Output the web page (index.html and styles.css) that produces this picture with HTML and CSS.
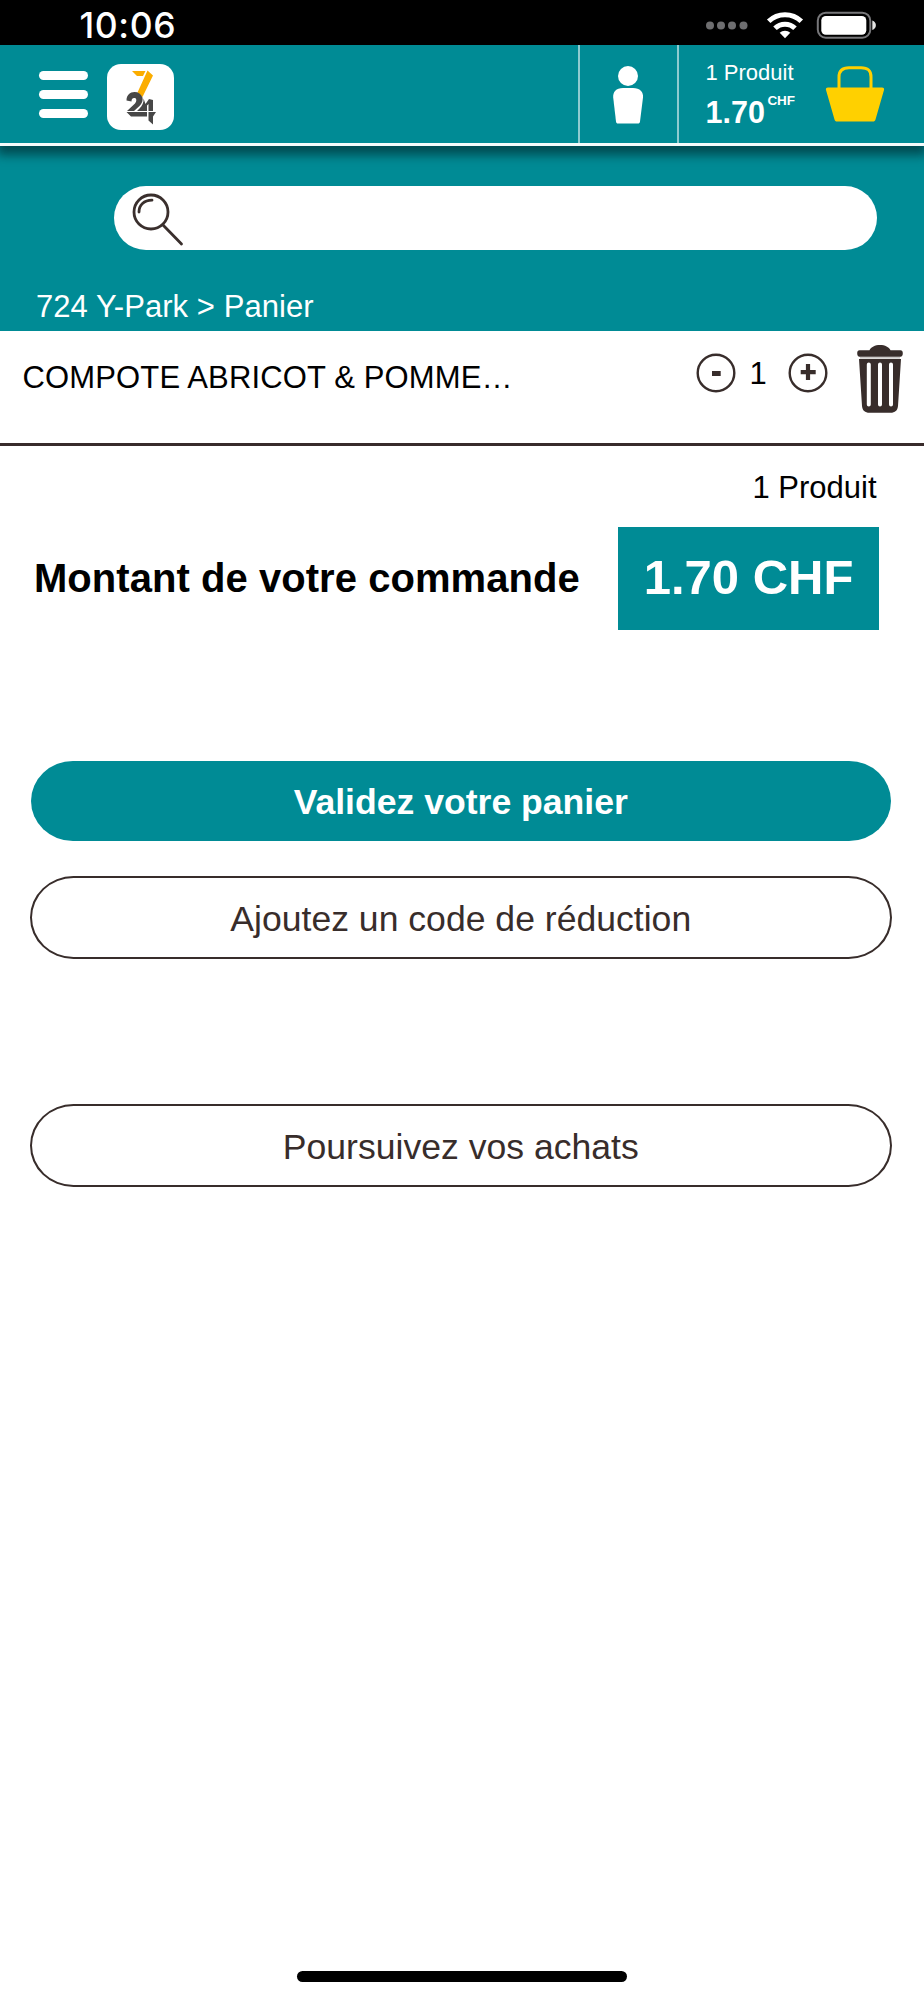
FILE: index.html
```html
<!DOCTYPE html>
<html lang="fr">
<head>
<meta charset="utf-8">
<title>724 Y-Park - Panier</title>
<link rel="stylesheet" href="styles.css">
</head>
<body>
<div class="screen">
  <div class="status">
    <span class="time">10:06</span>
    <svg class="status-icons" width="172" height="30" viewBox="0 0 172 30">
      <g fill="#6e6e70"><circle cx="4" cy="15.500" r="4"/><circle cx="15" cy="15.500" r="4"/><circle cx="26" cy="15.500" r="4"/><circle cx="37.500" cy="15.500" r="4"/></g>
      <g fill="none" stroke="#fff" stroke-width="5">
        <path d="M62.700 11.200a23.500 23.500 0 0 1 32.600 0"/>
        <path d="M69 18.300a14.200 14.200 0 0 1 20 0"/>
      </g>
      <path fill="#fff" d="M79 28.200l-5.300-5.400a7.800 7.800 0 0 1 10.600 0z"/>
      <rect x="111.800" y="2.700" width="52.500" height="25" rx="8" fill="none" stroke="#77777a" stroke-width="2"/>
      <rect x="115.300" y="6" width="45" height="18.700" rx="4.500" fill="#fff"/>
      <path fill="#e4e4e4" d="M166.300 10.500c4.800 1.500 4.800 8 0 9.500z"/>
    </svg>
  </div>

  <header class="header">
    <button class="menu" aria-label="Menu"><i></i><i></i><i></i></button>
    <div class="logo">
      <svg width="67" height="66" viewBox="0 0 67 66">
        <path fill="#fbad00" d="M25 7h13.500l-2.500 5h-6zM40.500 6.500l5.500 5-10.500 21.500-5-4.500z"/>
        <g fill="#474747">
          <path d="M19.500 36.500C19.500 31 23 28 27.500 28c4 0 6.500 2 8 5.500.6 3-.5 6-3 8.500l-5.500 5h-7l8-7.500c2-2.500 1.500-5 0-5.500-2.500-.5-3.500 1-3.500 3.500z"/>
          <path d="M36.500 34.500c.5 4-1.500 7.500-4 10L30 47h10v-5.500l1.500-1.500v7H46V36l-4-1-3.500 5z"/>
          <path d="M19.500 48h20.500v4.500H24zM41.500 48h7.500l-3 4.500v8l-4.500-4z"/>
        </g>
      </svg>
    </div>
    <div class="account">
      <svg width="32" height="60" viewBox="0 0 32 60">
        <circle cx="16" cy="11" r="10" fill="#fff"/>
        <path fill="#fff" d="M11 23h10c7 0 10.500 4 10 9.500L28 56.500c-.2 1.500-1 2-2 2H6c-1.200 0-1.800-.5-2-2L1.200 32.500C.8 27 4 23 11 23z"/>
      </svg>
    </div>
    <div class="cart">
      <div class="cart-text">
        <span class="cart-count">1 Produit</span>
        <span class="cart-total">1.70<sup>CHF</sup></span>
      </div>
      <svg width="60" height="58" viewBox="0 0 60 58">
        <path fill="none" stroke="#ffd000" stroke-width="3" d="M14 24V12C14 5 18 2.700 24 2.700h12c6.500 0 10 2.300 10 9.300v12"/>
        <path fill="#ffd000" d="M3 22.500h54c1.700 0 2.500 1 2 2.500l-8.500 29.500c-.5 1.500-1.200 2-2.500 2H12c-1.300 0-2-.5-2.500-2L1 25c-.5-1.500.3-2.500 2-2.500z"/>
      </svg>
    </div>
  </header>

  <section class="banner">
    <div class="search">
      <svg width="52" height="54" viewBox="0 0 52 54" fill="none" stroke="#3a2f2d" stroke-linecap="round">
        <circle cx="19" cy="20" r="17" stroke-width="2.800"/>
        <path stroke-width="2.800" d="M7 20C7 13 12 8.200 20 8.200M31 33l18.500 19"/>
      </svg>
    </div>
    <nav class="crumbs">724 Y-Park &gt; Panier</nav>
  </section>

  <div class="item">
    <span class="item-name">COMPOTE ABRICOT &amp; POMME…</span>
    <svg class="minus" width="40" height="40" viewBox="0 0 40 40">
      <circle cx="20" cy="20" r="18.300" fill="none" stroke="#382d2b" stroke-width="2.400"/>
      <path fill="#382d2b" d="M16 18h8.700v5H16z"/>
    </svg>
    <span class="qty">1</span>
    <svg class="plus" width="40" height="40" viewBox="0 0 40 40">
      <circle cx="20" cy="20" r="18.300" fill="none" stroke="#382d2b" stroke-width="2.400"/>
      <path fill="none" stroke="#382d2b" stroke-width="4.200" d="M12.700 19.200h15M20 11v16"/>
    </svg>
    <svg class="trash" width="46" height="70" viewBox="0 0 46 70">
      <path fill="#382d2b" d="M2.500 6.200h10C14 3 18 1 23 1s9 2 10.500 5.200h10c1.500 0 2.300 1 2.300 3s-.8 3.500-2.300 3.500h-41C1 12.700.2 11.200.2 9.200s.8-3 2.300-3z"/>
      <path fill="#b9b4b3" d="M3 13.300h40v1.200H3z"/>
      <path fill="#382d2b" fill-rule="evenodd" d="M2 15h42l-3 47c-.4 4.500-3 6.800-7.500 6.800h-21C8 68.800 5.400 66.500 5 62zM9.800 20.500v40a2 2 0 0 0 4 0v-40a2 2 0 0 0-4 0zM21 20.500v40a2 2 0 0 0 4 0v-40a2 2 0 0 0-4 0zM32 20.500v40a2 2 0 0 0 4 0v-40a2 2 0 0 0-4 0z"/>
    </svg>
  </div>

  <main class="summary">
    <p class="count">1 Produit</p>
    <div class="amount">
      <span class="amount-label">Montant de votre commande</span>
      <span class="amount-value">1.70 CHF</span>
    </div>
    <div class="actions">
      <button class="btn primary">Validez votre panier</button>
      <button class="btn">Ajoutez un code de réduction</button>
      <button class="btn next">Poursuivez vos achats</button>
    </div>
  </main>
  <div class="home-bar"></div>
</div>
</body>
</html>
```
FILE: styles.css
```css
* { box-sizing: border-box; }
body { margin: 0; background: #fff; font-family: "Liberation Sans", Arial, sans-serif; color: #000; }
button { margin: 0; padding: 0; border: 0; background: none; font: inherit; color: inherit; }
svg { display: block; flex: none; }

.screen { width: 924px; height: 2000px; display: flex; flex-direction: column; }

.status { height: 45px; flex: none; background: #000; color: #fff; display: flex; justify-content: space-between; padding: 0 46px 0 79.5px; }
.time { font: 500 35.5px/51px Inter, sans-serif; letter-spacing: 0.6px; }
.status-icons { margin-top: 10px; }

.header { height: 100.5px; flex: none; display: flex; background: #008b95; border-bottom: 3px solid #f4fbfb; position: relative; z-index: 1; box-shadow: 0 6px 10px 3px rgba(0, 50, 55, .72); clip-path: inset(0 0 -30px 0); }
.menu { width: 49px; height: 47px; margin: 25.5px 0 0 39px; display: flex; flex-direction: column; justify-content: space-between; }
.menu i { height: 9px; border-radius: 5px; background: #fff; }
.logo { width: 67px; height: 66px; margin: 19px 0 0 19px; border-radius: 14px; background: #fff; }
.account { width: 100.5px; margin-left: 404px; padding: 20px 0 0 32px; border: solid #8ecbd0; border-width: 0 2px; }
.cart { flex: 1; display: flex; justify-content: space-between; padding: 20px 39px 0 27px; color: #fff; }
.cart-text { display: flex; flex-direction: column; white-space: nowrap; }
.cart-count { font-size: 22px; line-height: 26px; margin-top: -5px; }
.cart-total { font-size: 30.5px; line-height: 36px; font-weight: bold; margin-top: 8px; display: flex; }
.cart-total sup { font-size: 13.500px; line-height: 14px; margin: 0 0 0 2.5px; }

.banner { height: 185.5px; flex: none; background: #008b95; padding: 40px 47px 0 114px; }
.search { height: 64.5px; border-radius: 33px; background: #fff; padding: 6px 0 0 18px; }
.crumbs { margin: 38px 0 0 -78px; color: #fff; font-size: 31px; line-height: 38px; letter-spacing: 0.05px; }

.item { height: 115px; flex: none; border-bottom: 3px solid #382b2b; display: flex; align-items: flex-start; padding-left: 22.5px; }
.item-name { width: 673.5px; font-size: 31px; line-height: 36px; margin-top: 29px; white-space: nowrap; letter-spacing: 0.14px; }
.minus, .plus { margin-top: 22px; }
.qty { width: 52px; padding-right: 8px; text-align: center; font-size: 31px; line-height: 36px; margin-top: 25px; }
.trash { margin: 13px 0 0 28.5px; }

.summary { padding: 24px 30px 0; }
.count { margin: 0 17.5px 0 0; text-align: right; font-size: 31px; line-height: 36px; }
.amount { margin: 21px 15px 0 4px; display: flex; justify-content: space-between; align-items: center; font-weight: bold; }
.amount-label { font-size: 40px; line-height: 48px; letter-spacing: 0.05px; }
.amount-value { width: 261px; height: 102.5px; line-height: 101px; text-align: center; background: #008b95; color: #fff; font-size: 49px; }
.actions { margin: 131.5px 2.5px 0 0; display: flex; flex-direction: column; }
.btn { height: 83px; border: 2px solid #382d2b; border-radius: 44px / 42px; font-size: 35.6px; color: #382d2b; line-height: 79px; padding-top: 2px; }
.btn.primary { height: 80px; margin: 0 1px 34.5px; border: 0; background: #008b95; color: #fff; font-weight: bold; }
.btn.next { margin-top: 145px; }

.home-bar { width: 330px; height: 11px; border-radius: 6px; background: #000; margin: auto auto 18px 297px; }
```
